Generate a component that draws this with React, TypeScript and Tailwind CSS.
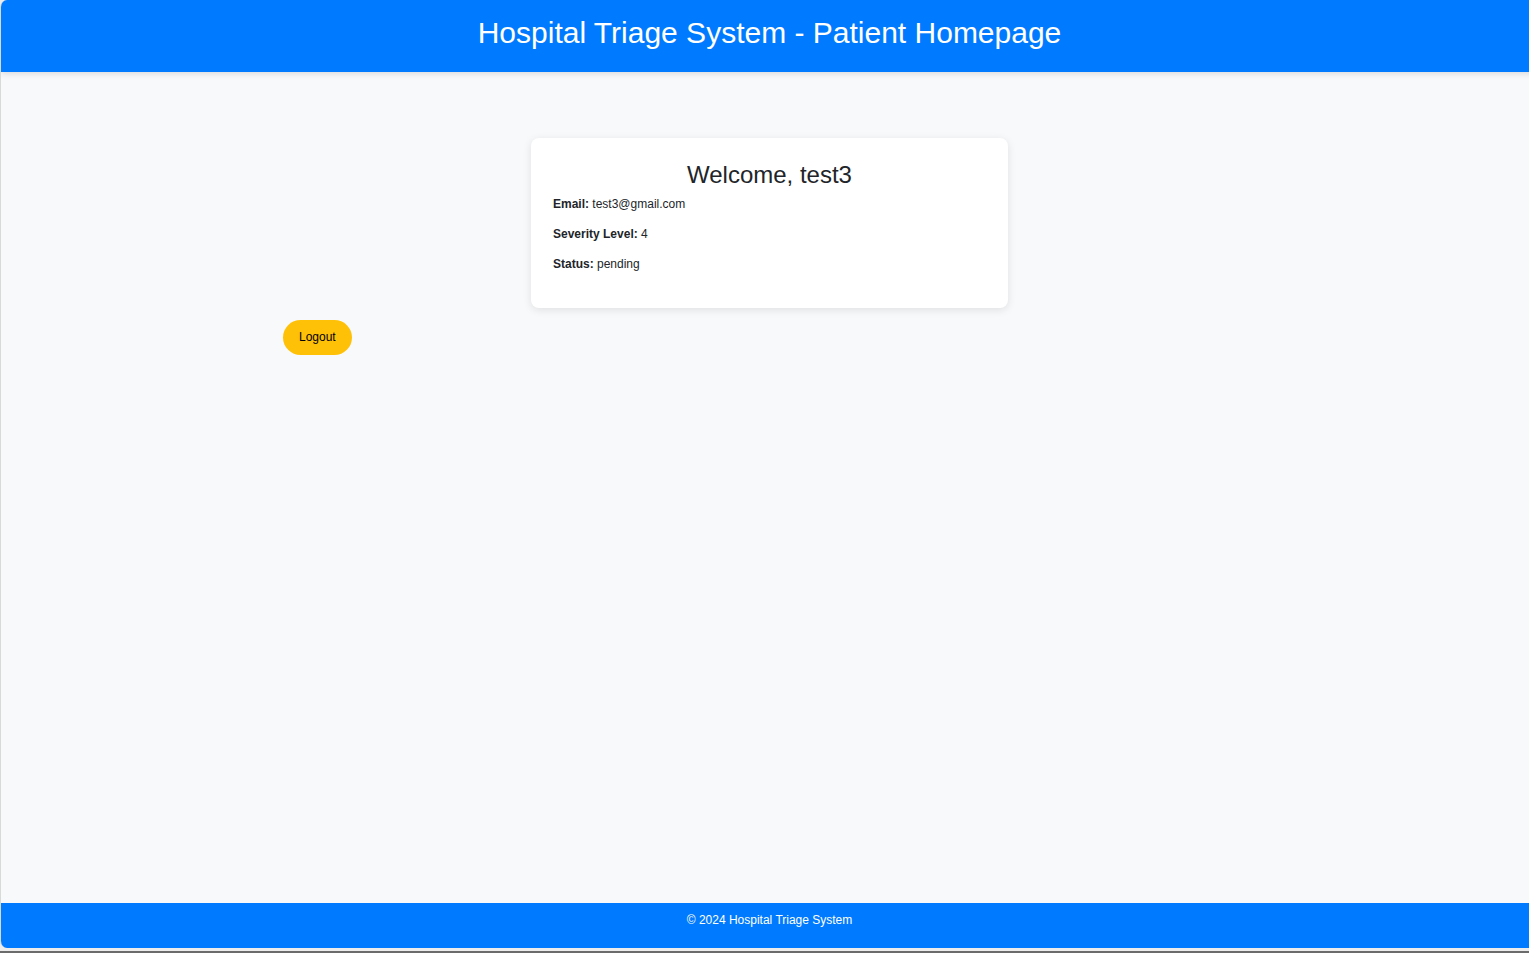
import React from "react";

export default function App() {
  return (
    <div className="w-[1529px] h-[953px] overflow-hidden bg-[#6b6b6b] font-['Liberation_Sans',Arial,sans-serif]">
      <div className="h-[951px] bg-[#ececec] overflow-hidden">
        <div className="w-[1538px] h-[948px] flex flex-col bg-[#f8f9fa] border-l border-[#d9d9d9] rounded-l-[7px] overflow-hidden">
          <header className="h-[72px] shrink-0 bg-[#007bff] shadow-[0_2px_6px_rgba(0,0,0,0.12)] relative z-10 pt-[16px]">
            <h1 className="text-center text-white text-[30px] leading-[34px]">
              Hospital Triage System - Patient Homepage
            </h1>
          </header>
          <main className="flex-1 flex flex-col pt-[66px]">
            <div className="mx-auto w-[477px] bg-white rounded-[8px] shadow-[0_2px_8px_rgba(0,0,0,0.1)] px-[22px] pt-[23px] pb-[35px] text-[#212529]">
              <h2 className="text-center text-[24px] leading-[28px]">Welcome, test3</h2>
              <p className="mt-[6px] text-[12px] leading-[18px]">
                <span className="font-bold">Email:</span> test3@gmail.com
              </p>
              <p className="mt-[12px] text-[12px] leading-[18px]">
                <span className="font-bold">Severity Level:</span> 4
              </p>
              <p className="mt-[12px] text-[12px] leading-[18px]">
                <span className="font-bold">Status:</span> pending
              </p>
            </div>
            <div className="pl-[282px] mt-[12px]">
              <button className="h-[35px] px-[16px] pb-[2px] rounded-full bg-[#ffc107] text-black text-[12px]">
                Logout
              </button>
            </div>
          </main>
          <footer className="h-[45px] shrink-0 bg-[#007bff] pt-[10px]">
            <p className="text-center text-white text-[12px] leading-[14px]">© 2024 Hospital Triage System</p>
          </footer>
        </div>
      </div>
    </div>
  );
}
